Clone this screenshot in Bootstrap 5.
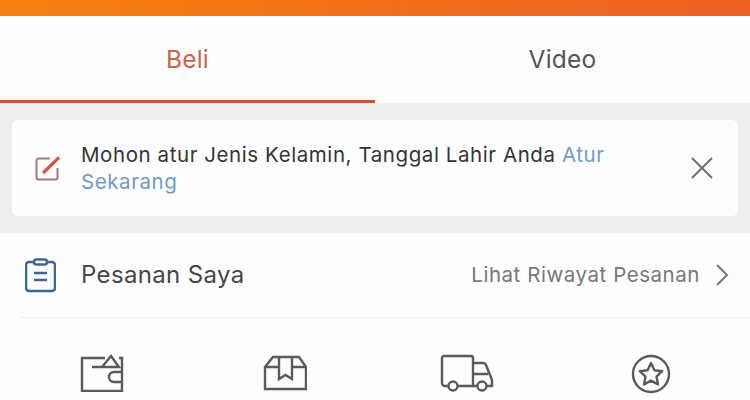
<!DOCTYPE html>
<html lang="id">
<head>
    <meta charset="UTF-8">
    <title>Akun Saya</title>
    <link href="https://cdn.jsdelivr.net/npm/bootstrap@5.3.3/dist/css/bootstrap.min.css" rel="stylesheet">
    <style>
        body { width: 750px; height: 400px; overflow: hidden; background: #fdfdfe; font-family: Inter, "Liberation Sans", sans-serif; color: #3d3d40; }
        .top-strip { height: 16px; background: linear-gradient(90deg, #f5810f, #ee5f24); }
        .tab-bar { height: 87px; }
        .tab-item { width: 375px; height: 87px; font-size: 24.5px; padding-top: 25px; line-height: 36px; letter-spacing: .2px; color: #545457; }
        .tab-on { color: #c9654f; border-bottom: 3px solid #c8523b; }
        .hint-area { height: 130px; background: #efeff0; padding: 17px 12px 0; }
        .hint-box { height: 96px; background: #fdfdfe; border-radius: 6px; padding: 0 24px 0 23px; }
        .hint-text { width: 560px; margin-left: 21px; font-size: 20.5px; line-height: 27px; letter-spacing: .58px; color: #343437; }
        .hint-link { color: #6d9cc4; }
        .order-row { height: 85px; margin-left: 21px; padding-right: 21px; border-bottom: 1px solid #ececee; }
        .order-title { margin-left: 25px; font-size: 24px; letter-spacing: .35px; color: #464649; }
        .order-more { font-size: 20.5px; letter-spacing: .55px; color: #77777b; margin-right: 15px; }
        .status-row { padding: 36px 0 0 10px; }
        .status-cell { width: 183px; flex: none; }
    </style>
</head>
<body>
    <div class="top-strip"></div>

    <!-- Tab Beli / Video -->
    <div class="tab-bar d-flex">
        <div class="tab-item tab-on text-center">Beli</div>
        <div class="tab-item text-center">Video</div>
    </div>

    <!-- Pengingat profil -->
    <div class="hint-area">
        <div class="hint-box d-flex align-items-center">
            <svg width="25" height="25" viewBox="0 0 25 25" fill="none">
                <path d="M15 2.500H3.500a2 2 0 0 0-2 2v17a2 2 0 0 0 2 2h17a2 2 0 0 0 2-2V12" stroke="#a27a70" stroke-width="2"/>
                <path d="M8 17 24 1.500" stroke="#d2553c" stroke-width="3.200"/>
            </svg>
            <div class="hint-text">Mohon atur Jenis Kelamin, Tanggal Lahir Anda <span class="hint-link">Atur Sekarang</span></div>
            <svg class="ms-auto" width="24" height="24" viewBox="0 0 24 24" fill="none" stroke="#6f6f72" stroke-width="2">
                <path d="M2 2 22 22M22 2 2 22"/>
            </svg>
        </div>
    </div>

    <!-- Pesanan -->
    <div class="order-row d-flex align-items-center">
        <svg class="ms-1" width="31" height="35" viewBox="0 0 31 35" fill="none" stroke="#3f6594" stroke-width="2.500">
            <path d="M9 4H4a3 3 0 0 0-3 3v23a3 3 0 0 0 3 3h23a3 3 0 0 0 3-3V7a3 3 0 0 0-3-3h-5"/>
            <rect x="9" y="1.500" width="13" height="5" rx="2.500"/>
            <path d="M9 15h13M9 22h13"/>
        </svg>
        <span class="order-title">Pesanan Saya</span>
        <span class="order-more ms-auto">Lihat Riwayat Pesanan</span>
        <svg width="14" height="22" viewBox="0 0 14 22" fill="none" stroke="#77777b" stroke-width="2">
            <path d="M2 1 12 11 2 21"/>
        </svg>
    </div>

    <!-- Status pesanan -->
    <div class="status-row d-flex">
        <div class="status-cell text-center">
            <svg width="44" height="38" viewBox="0 0 44 38" fill="none" stroke="#5a5a5d" stroke-width="2.400">
                <path d="M25 4H2v33h40V4h-3"/>
                <path d="M22 13 31 2l8 11zM12 13h10"/>
                <path d="M42 18h-8a5 5 0 0 0 0 10h8"/>
            </svg>
        </div>
        <div class="status-cell text-center">
            <svg width="44" height="38" viewBox="0 0 44 38" fill="none" stroke="#5a5a5d" stroke-width="2.400">
                <path d="M2 13 10 3h26l7 10v22H2zM2 13h14M29 13h14M16 3v22l6.500-4 6.500 4V3"/>
            </svg>
        </div>
        <div class="status-cell text-center">
            <svg width="56" height="38" viewBox="0 0 56 38" fill="none" stroke="#5a5a5d" stroke-width="2.400">
                <path d="M8 32H5a3 3 0 0 1-3-3V4a2 2 0 0 1 2-2h27a2 2 0 0 1 2 2v28H18"/>
                <path d="M33 9h10a3 3 0 0 1 3 2l6 15v6h-5M37 32h-4M34 20h14"/>
                <circle cx="13" cy="32" r="4.500"/>
                <circle cx="42" cy="32" r="4.500"/>
            </svg>
        </div>
        <div class="status-cell text-center">
            <svg width="40" height="40" viewBox="0 0 40 40" fill="none" stroke="#5a5a5d" stroke-width="2.400" stroke-linejoin="round">
                <circle cx="20" cy="20" r="18"/>
                <path d="m20 9 3.400 7.200 7.800 1-5.700 5.400 1.500 7.800-7-3.800-7 3.800 1.500-7.800-5.700-5.400 7.800-1z"/>
            </svg>
        </div>
    </div>

    <script src="https://cdn.jsdelivr.net/npm/bootstrap@5.3.3/dist/js/bootstrap.bundle.min.js"></script>
</body>
</html>
